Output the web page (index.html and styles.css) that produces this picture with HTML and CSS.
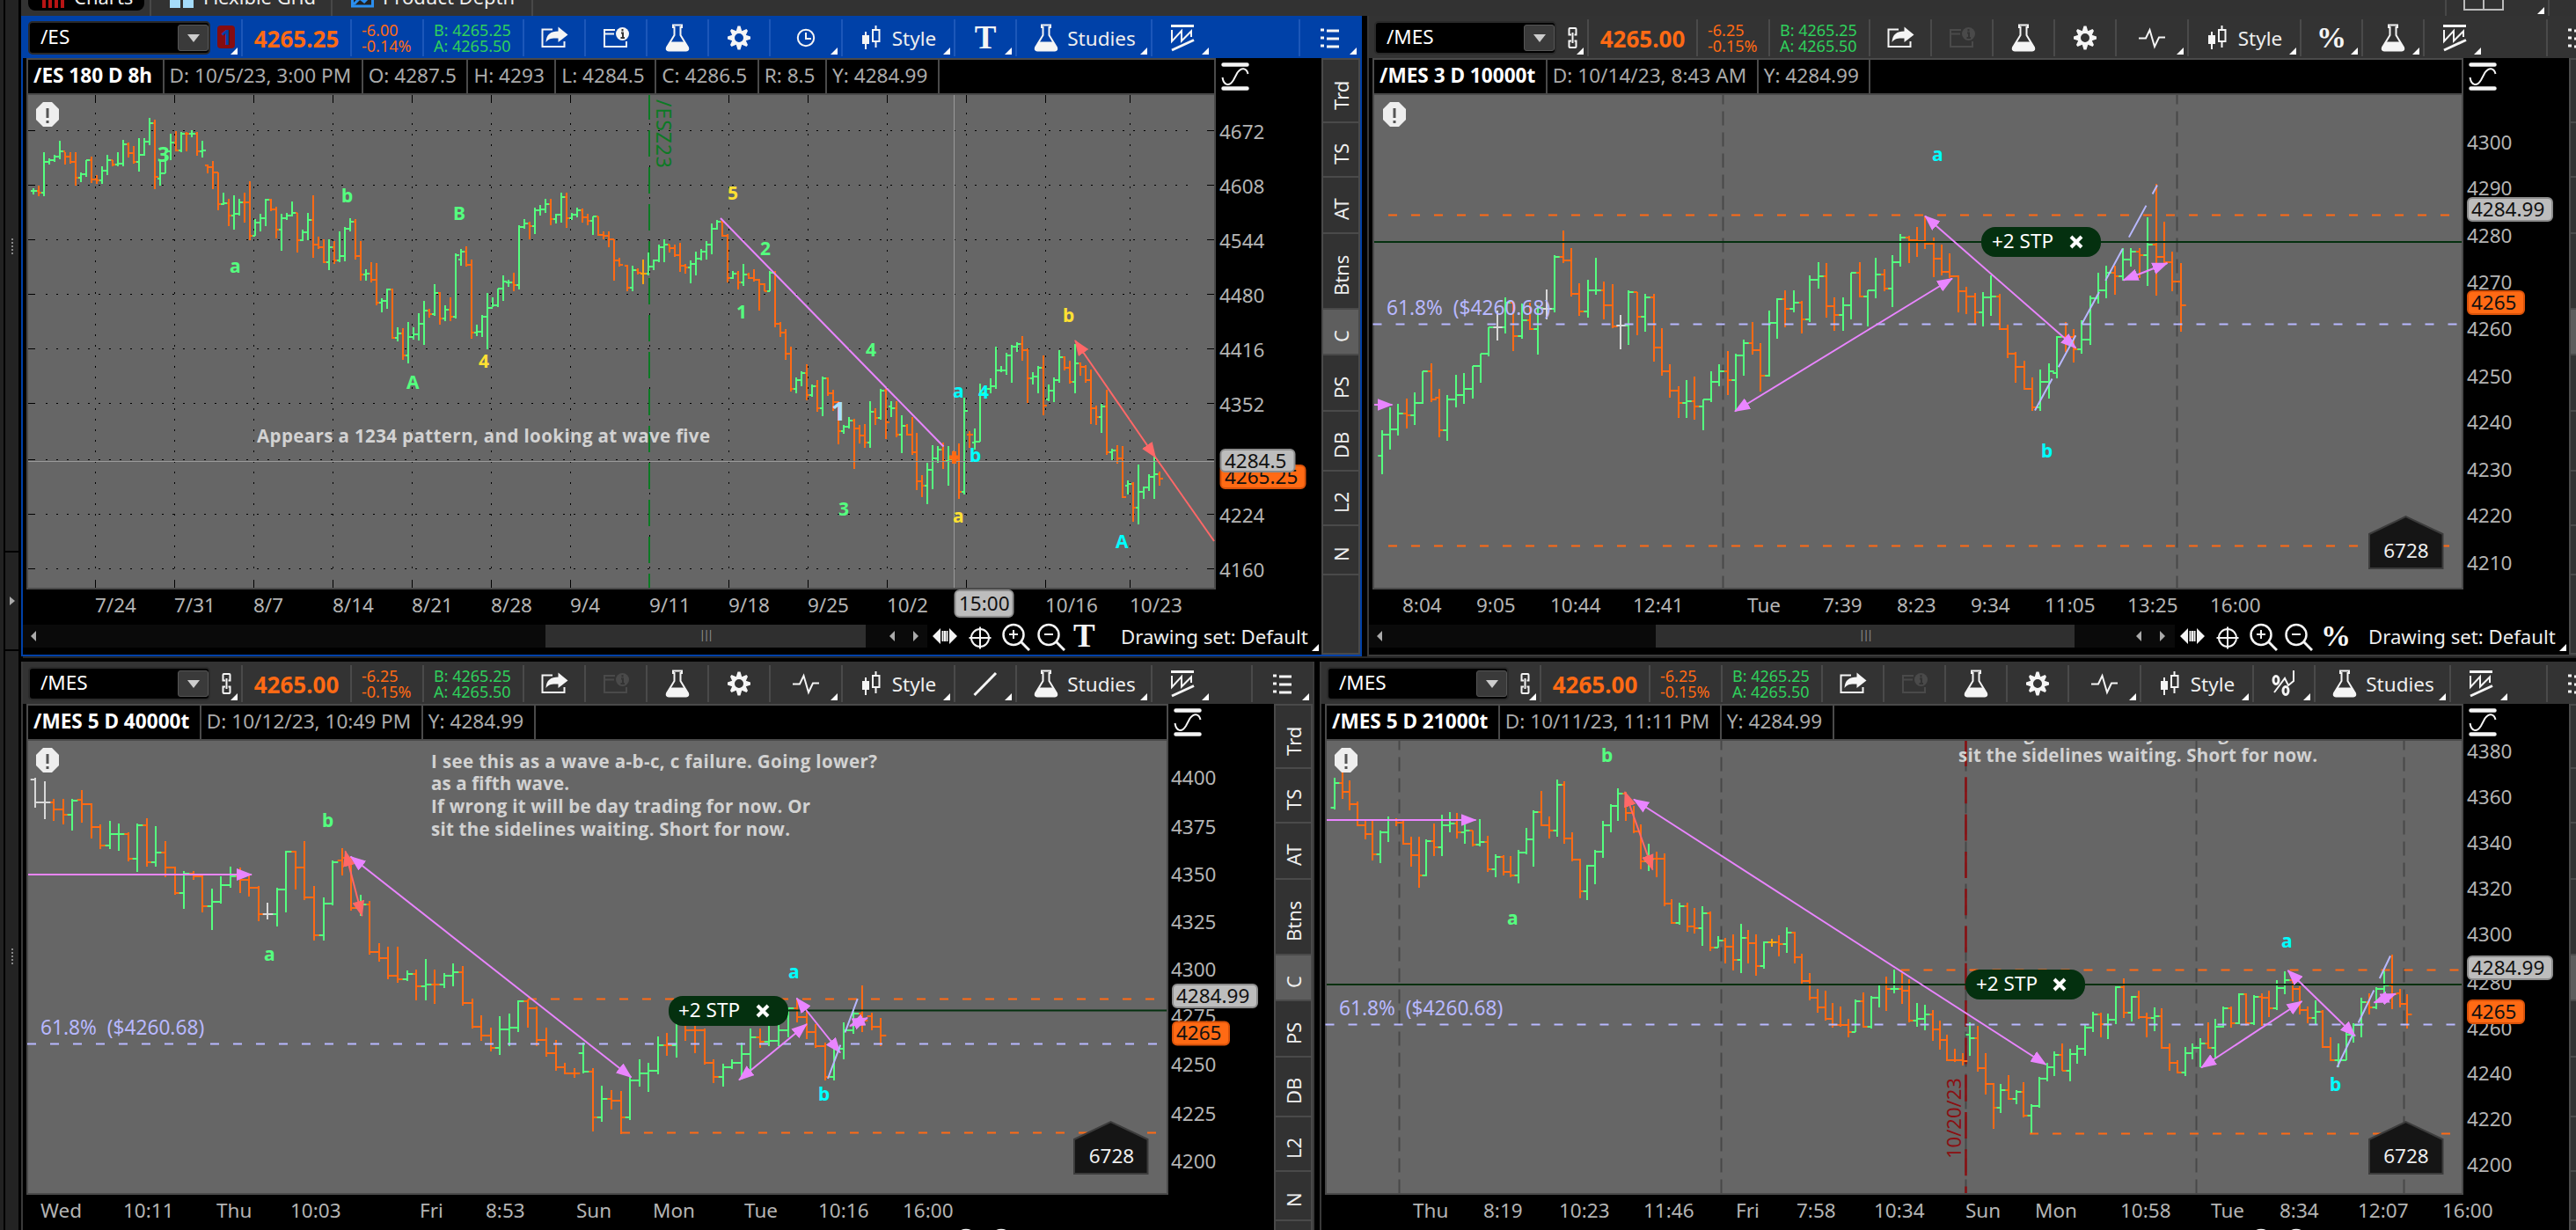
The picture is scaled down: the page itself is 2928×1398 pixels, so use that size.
FILE: index.html
```
<!DOCTYPE html>
<html lang="en">
<head>
<meta charset="utf-8">
<title>Charts - Flexible Grid</title>
<link rel="stylesheet" href="styles.css">
</head>
<body>

<!-- shared icons -->
<svg class="defs" width="0" height="0">
  <defs>
    <marker id="headP" viewBox="0 0 18 14" refX="17" refY="7" markerWidth="18" markerHeight="14" markerUnits="userSpaceOnUse" orient="auto-start-reverse"><path d="M0 0L18 7L0 14Z" fill="#e985ff"/></marker>
    <marker id="headR" viewBox="0 0 18 14" refX="17" refY="7" markerWidth="18" markerHeight="14" markerUnits="userSpaceOnUse" orient="auto-start-reverse"><path d="M0 0L18 7L0 14Z" fill="#ff6868"/></marker>
  </defs>
  <symbol id="share" viewBox="0 0 32 32"><path class="s" d="M14 6.500H2.500V26H27.500V20"/><path class="f" d="M20.500 3.500L31.500 12.500L20.500 21V16.500C13 16 9 17 6.500 21C7 12 12 8.500 20.500 8.500Z"/></symbol>
  <symbol id="info" viewBox="0 0 32 32"><path class="s" d="M15 7H3V26H28V20M3 11.500H14"/><circle class="f" cx="23.500" cy="11.500" r="7.500"/><path class="cut" d="M23.500 6V8.500M22 10.500H24V15.500M21.500 16H26"/></symbol>
  <symbol id="flask" viewBox="0 0 32 32"><path class="s" d="M11 1.500H21V4H19.500V13L28 27Q29 30.500 26 30.500H6Q3 30.500 4 27L12.500 13V4H11Z"/><path class="f" d="M8 20.500H24L28 27Q29 30.500 26 30.500H6Q3 30.500 4 27Z"/></symbol>
  <symbol id="gear" viewBox="0 0 32 32"><path class="f" fill-rule="evenodd" d="M29 14.500V17.500L23.850 19.250L26 24L24.500 26L19.250 23.850L17.500 29.500H14.500L12.750 23.850L7.500 26L6 24L8.150 19.250L3 17.500V14.500L8.150 12.750L6 8L7.500 6L12.750 8.150L14.500 2.500H17.500L19.250 8.150L24.500 6L26 8L23.850 12.750ZM16 11A5 5 0 1 0 16 21A5 5 0 1 0 16 11Z"/></symbol>
  <symbol id="clock" viewBox="0 0 32 32"><circle class="s" cx="16" cy="16" r="9.200"/><path class="s" d="M16 10V17H22"/></symbol>
  <symbol id="pulse" viewBox="0 0 32 32"><path class="s" d="M1 16.500H9L13.500 7L19 26L24 15.500H31"/></symbol>
  <symbol id="candles" viewBox="0 0 24 32"><path class="s" d="M6 9V29M17.500 2V7M17.500 20V27"/><path class="f" d="M2 13H10V23H2Z"/><path class="s" d="M14 7H21.500V20H14Z"/></symbol>
  <symbol id="pattern" viewBox="0 0 32 32"><path class="s3" d="M3 2.500H29M4 30L29 18.500"/><path class="s" d="M4 7V20L15 8V19.500L26 8.500V15"/></symbol>
  <symbol id="list" viewBox="0 0 22 24"><path class="s3" d="M0 3H4M7 4H21M0 12H4M7 13H21M0 21H4M7 22H21"/></symbol>
  <symbol id="chain" viewBox="0 0 14 26"><path class="s" d="M5 9.500H2.500V3Q2.500 2 3.500 2H9.500Q10.500 2 10.500 3V9.500H8.500M5 16.500H2.500V23Q2.500 24 3.500 24H9.500Q10.500 24 10.500 23V16.500H8.500M6.500 7V19"/></symbol>
  <symbol id="trend" viewBox="0 0 32 32"><path class="s3" d="M3.500 29L28 4"/></symbol>
  <symbol id="sine" viewBox="0 0 32 32"><path class="s4" d="M2.500 2.500H29.500M2.500 29.500H29.500"/><path class="s" d="M1.500 17C3 26 9 28 14 20L18.500 11.500C23 5 29 6 30.500 13"/></symbol>
  <symbol id="expand" viewBox="0 0 28 20"><path class="f" d="M0 10L9 1V19ZM28 10L19 1V19Z"/><path class="s" d="M11.500 4V16M14 4V16M16.500 4V16"/></symbol>
  <symbol id="cross" viewBox="0 0 26 26"><circle class="s" cx="13" cy="13" r="10"/><path class="s" d="M13 0.500V25.500M0.500 13H25.500"/></symbol>
  <symbol id="zoomin" viewBox="0 0 32 32"><circle class="s25" cx="13" cy="13.500" r="11.500"/><path class="s3" d="M21.500 21.500L31 31"/><path class="s" d="M8 13H18M13 8V18"/></symbol>
  <symbol id="zoomout" viewBox="0 0 32 32"><circle class="s25" cx="13" cy="13.500" r="11.500"/><path class="s3" d="M21.500 21.500L31 31"/><path class="s" d="M8 13H18"/></symbol>
  <symbol id="alert" viewBox="0 0 28 30"><path class="f" d="M9 1H19L27 9V21L19 29H9L1 21V9Z"/><path d="M14 8V19M14 22V25" stroke="#555" stroke-width="3"/></symbol>
</svg>

<aside class="rail">
  <div class="rail-a"><i class="grip"></i></div>
  <div class="rail-b"><i class="open"></i></div>
  <div class="rail-c"><i class="grip"></i></div>
</aside>

<nav class="top">
  <div class="top-tab active"><svg width="26" height="26" viewBox="0 0 26 26"><path d="M0 16H4V26H0ZM7 10H11V26H7ZM14 5H18V26H14ZM21 0H25V26H21Z" fill="#b81414"/></svg>Charts</div>
  <div class="top-tab flex-tab"><svg width="28" height="26" viewBox="0 0 28 26"><path d="M0 0H12V12H0ZM0 15H12V26H0ZM15 0H27V12H15ZM15 15H27V26H15Z" fill="#a5dcfb"/></svg>Flexible Grid</div>
  <div class="top-tab depth-tab"><svg width="26" height="26" viewBox="0 0 26 26"><path d="M1.500 1H24.500V24H1.500Z" fill="#222" stroke="#2b8ff0" stroke-width="3"/><path d="M3 22L10 15L15 19L22 12" fill="none" stroke="#2b8ff0" stroke-width="3"/></svg>Product Depth</div>
  <div class="top-grid tri"><svg width="46" height="26" viewBox="0 0 46 26"><path d="M1 0V25H45V0M23 0V25" fill="none" stroke="#bbb" stroke-width="2"/></svg></div>
</nav>

<main class="work">
<div class="row">

<!-- /ES 180 D 8h -->
<section class="panel p1">
  <div class="toolbar">
    <div class="symbol"><span>/ES</span><b></b></div>
    <div class="link tri"><em>1</em></div>
    <div class="cell price">4265.25</div>
    <div class="cell change">-6.00<br>-0.14%</div>
    <div class="cell quote">B: 4265.25<br>A: 4265.50</div>
    <div class="cell"><svg class="ic"><use href="#share"/></svg></div>
    <div class="cell"><svg class="ic"><use href="#info"/></svg></div>
    <div class="cell"><svg class="ic"><use href="#flask"/></svg></div>
    <div class="cell"><svg class="ic"><use href="#gear"/></svg></div>
    <div class="cell mid tri"><svg class="ic"><use href="#clock"/></svg></div>
    <div class="cell style tri"><svg class="ic can"><use href="#candles"/></svg>Style</div>
    <div class="cell tri"><span class="serif">T</span></div>
    <div class="cell studies tri"><svg class="ic"><use href="#flask"/></svg>Studies</div>
    <div class="cell tri"><svg class="ic"><use href="#pattern"/></svg></div>
    <div class="cell last tri"><svg class="ic li"><use href="#list"/></svg></div>
  </div>
  <div class="body">
    <div class="chart">
      <div class="head">
        <div class="info"><b>/ES 180 D 8h</b><span>D: 10/5/23, 3:00 PM</span><span>O: 4287.5</span><span>H: 4293</span><span>L: 4284.5</span><span>C: 4286.5</span><span>R: 8.5</span><span>Y: 4284.99</span></div>
        <div class="mode"><svg class="ic"><use href="#sine"/></svg></div>
      </div>
      <svg class="plot" width="1476" height="602" viewBox="26 108 1476 602">
        <rect class="frame" x="30" y="106" width="1352" height="564"/>
        <rect class="bg" x="32" y="108" width="1348" height="560"/>
        <g id="grid"></g>
        <path class="expiry" d="M738 106V668"/>
        <text class="exp" transform="translate(745.500 113) rotate(90)" textLength="78">/ESZ23</text>
        <g id="bars1"></g>
        <path class="hair" d="M1084.500 108V668M32 524.500H1380"/>
        <path class="pick" d="M1084.500 513V527M1079 520H1090"/>
        <path class="pl" d="M819 248L1072.500 507.500"/>
        <path class="rl" marker-start="url(#headR)" marker-end="url(#headR)" d="M1222 387L1313.500 520"/>
        <path class="rl" d="M1313.500 520L1380 615"/>
        <g class="note g">
          <text x="261" y="310">a</text><text x="388" y="230">b</text><text x="515" y="250">B</text>
          <text class="big" x="179" y="184">3</text><text x="462" y="442">A</text>
          <text x="864" y="290">2</text><text x="837" y="362">1</text><text x="984" y="405">4</text><text x="953" y="586">3</text>
        </g>
        <g class="note y"><text x="544" y="418">4</text><text x="827" y="227">5</text><text x="1208" y="366">b</text><text x="1083" y="594">a</text></g>
        <g class="note c"><text x="1083" y="452">a</text><text x="1112" y="453">4</text><text x="1102" y="525">b</text><text x="1268" y="623">A</text></g>
        <text class="note huge" x="945" y="478">1</text>
        <text class="memo" x="292" y="503" textLength="515">Appears a 1234 pattern, and looking at wave five</text>
        <svg x="40" y="115" width="28" height="30"><use href="#alert"/></svg>
        <g class="axis">
          <text x="1386" y="158">4672</text><text x="1386" y="220">4608</text><text x="1386" y="282">4544</text><text x="1386" y="344">4480</text><text x="1386" y="406">4416</text><text x="1386" y="468">4352</text><text x="1386" y="594">4224</text><text x="1386" y="656">4160</text>
          <text x="108" y="696">7/24</text><text x="198" y="696">7/31</text><text x="288" y="696">8/7</text><text x="378" y="696">8/14</text><text x="468" y="696">8/21</text><text x="558" y="696">8/28</text><text x="648" y="696">9/4</text><text x="738" y="696">9/11</text><text x="828" y="696">9/18</text><text x="918" y="696">9/25</text><text x="1008" y="696">10/2</text><text x="1188" y="696">10/16</text><text x="1284" y="696">10/23</text>
        </g>
        <rect class="last" x="1387.500" y="529" width="96" height="26" rx="5"/><text class="bt" x="1392" y="549.500">4265.25</text>
        <rect class="cur" x="1387.500" y="511" width="84" height="25" rx="5"/><text class="bt" x="1392" y="532">4284.5</text>
        <rect class="cur" x="1085.500" y="671" width="66" height="30" rx="5"/><text class="bt" x="1090" y="693.500">15:00</text>
      </svg>
      <div class="foot">
        <div class="track"><i class="al"></i><div class="thumb">|||</div><i class="al r1"></i><i class="ar"></i></div>
        <div class="tools tri"><svg class="ic ex"><use href="#expand"/></svg><svg class="ic cr"><use href="#cross"/></svg><svg class="ic zi"><use href="#zoomin"/></svg><svg class="ic zo"><use href="#zoomout"/></svg><span class="serif">T</span><span class="set">Drawing set: Default</span></div>
      </div>
    </div>
    <div class="side"><a>Trd</a><a>TS</a><a>AT</a><a>Btns</a><a class="on">C</a><a>PS</a><a>DB</a><a>L2</a><a>N</a><a></a></div>
  </div>
</section>

<!-- /MES 3 D 10000t -->
<section class="panel p2">
  <div class="toolbar">
    <div class="symbol"><span>/MES</span><b></b></div>
    <div class="link tri"><svg class="ic ch"><use href="#chain"/></svg></div>
    <div class="cell price">4265.00</div>
    <div class="cell change">-6.25<br>-0.15%</div>
    <div class="cell quote">B: 4265.25<br>A: 4265.50</div>
    <div class="cell"><svg class="ic"><use href="#share"/></svg></div>
    <div class="cell dim"><svg class="ic"><use href="#info"/></svg></div>
    <div class="cell"><svg class="ic"><use href="#flask"/></svg></div>
    <div class="cell"><svg class="ic"><use href="#gear"/></svg></div>
    <div class="cell mid tri"><svg class="ic"><use href="#pulse"/></svg></div>
    <div class="cell style tri"><svg class="ic can"><use href="#candles"/></svg>Style</div>
    <div class="cell tri"><span class="serif pct">%</span></div>
    <div class="cell tri"><svg class="ic"><use href="#flask"/></svg></div>
    <div class="cell tri"><svg class="ic"><use href="#pattern"/></svg></div>
    <div class="cell last tri"><svg class="ic li"><use href="#list"/></svg></div>
  </div>
  <div class="body">
    <div class="chart">
      <div class="head">
        <div class="info"><b>/MES 3 D 10000t</b><span>D: 10/14/23, 8:43 AM</span><span>Y: 4284.99</span></div>
        <div class="mode"><svg class="ic"><use href="#sine"/></svg></div>
      </div>
      <svg class="plot" width="1364" height="602" viewBox="1556 108 1364 602">
        <rect class="frame" x="1560" y="106" width="1240" height="564"/>
        <rect class="bg" x="1562" y="108" width="1236" height="560"/>
        <path class="day" d="M1958.500 102.500V668M2474.500 102.500V668"/>
        <g id="bars2"></g>
        <path class="od" d="M1562 244.500H2786M1562 620.500H2786"/>
        <path class="fib" d="M1560.500 368.500H2796"/>
        <text class="fibt" x="1576" y="358" xml:space="preserve">61.8%  ($4260.68)</text>
        <path class="stop" d="M1562 275H2798"/>
        <rect class="pill" x="2252" y="258" width="136" height="34" rx="16"/><text class="pt" x="2264" y="282">+2 STP</text><path class="px" d="M2354 269L2366 281M2366 269L2354 281"/>
        <path class="pl" marker-end="url(#headP)" d="M1562 460H1582.500"/>
        <path class="pl" marker-start="url(#headP)" marker-end="url(#headP)" d="M1972 467.500L2219 316.500"/>
        <path class="pl" marker-start="url(#headP)" marker-end="url(#headP)" d="M2188 245.500L2359.500 395.500"/>
        <path class="pl" marker-start="url(#headP)" marker-end="url(#headP)" d="M2413.500 318.500L2463.500 299"/>
        <path class="proj" d="M2313 466.500L2452 210.500"/>
        <g class="note c"><text x="2196" y="183">a</text><text x="2320" y="520">b</text></g>
        <svg x="1571" y="115" width="28" height="30"><use href="#alert"/></svg>
        <path class="tag" d="M2693 607L2734.500 587L2776.500 607V646H2693Z"/><text class="tagt" x="2735" y="634">6728</text>
        <g class="axis">
          <text x="2804" y="170">4300</text><text x="2804" y="222">4290</text><text x="2804" y="276">4280</text><text x="2804" y="328.500">4270</text><text x="2804" y="382">4260</text><text x="2804" y="436">4250</text><text x="2804" y="488">4240</text><text x="2804" y="542">4230</text><text x="2804" y="594">4220</text><text x="2804" y="648">4210</text>
          <text x="1594" y="696">8:04</text><text x="1678" y="696">9:05</text><text x="1762" y="696">10:44</text><text x="1856" y="696">12:41</text><text x="1986" y="696">Tue</text><text x="2072" y="696">7:39</text><text x="2156" y="696">8:23</text><text x="2240" y="696">9:34</text><text x="2324" y="696">11:05</text><text x="2418" y="696">13:25</text><text x="2512" y="696">16:00</text>
        </g>
        <rect class="cur" x="2805" y="225" width="96" height="26" rx="5"/><text class="bt" x="2809" y="245.500">4284.99</text>
        <rect class="last" x="2805" y="331" width="64" height="26" rx="5"/><text class="bt" x="2809" y="351.500">4265</text>
      </svg>
      <div class="foot">
        <div class="track"><i class="al"></i><div class="thumb">|||</div><i class="al r1"></i><i class="ar"></i></div>
        <div class="tools tri"><svg class="ic ex"><use href="#expand"/></svg><svg class="ic cr"><use href="#cross"/></svg><svg class="ic zi"><use href="#zoomin"/></svg><svg class="ic zo"><use href="#zoomout"/></svg><span class="serif pct">%</span><span class="set">Drawing set: Default</span></div>
      </div>
    </div>
    <div class="side"><a></a><a></a><a></a><a></a><a class="on"></a><a></a><a></a><a></a><a></a><a></a></div>
  </div>
</section>
</div>

<div class="row">

<!-- /MES 5 D 40000t -->
<section class="panel p3">
  <div class="toolbar">
    <div class="symbol"><span>/MES</span><b></b></div>
    <div class="link tri"><svg class="ic ch"><use href="#chain"/></svg></div>
    <div class="cell price">4265.00</div>
    <div class="cell change">-6.25<br>-0.15%</div>
    <div class="cell quote">B: 4265.25<br>A: 4265.50</div>
    <div class="cell"><svg class="ic"><use href="#share"/></svg></div>
    <div class="cell dim"><svg class="ic"><use href="#info"/></svg></div>
    <div class="cell"><svg class="ic"><use href="#flask"/></svg></div>
    <div class="cell"><svg class="ic"><use href="#gear"/></svg></div>
    <div class="cell mid tri"><svg class="ic"><use href="#pulse"/></svg></div>
    <div class="cell style tri"><svg class="ic can"><use href="#candles"/></svg>Style</div>
    <div class="cell tri"><svg class="ic"><use href="#trend"/></svg></div>
    <div class="cell studies tri"><svg class="ic"><use href="#flask"/></svg>Studies</div>
    <div class="cell tri"><svg class="ic"><use href="#pattern"/></svg></div>
    <div class="cell last tri"><svg class="ic li"><use href="#list"/></svg></div>
  </div>
  <div class="body">
    <div class="chart">
      <div class="head">
        <div class="info"><b>/MES 5 D 40000t</b><span>D: 10/12/23, 10:49 PM</span><span>Y: 4284.99</span></div>
        <div class="mode"><svg class="ic"><use href="#sine"/></svg></div>
      </div>
      <svg class="plot" width="1422" height="556" viewBox="26 842 1422 556">
        <rect class="frame" x="30" y="840" width="1298" height="518"/>
        <rect class="bg" x="32" y="842" width="1294" height="514"/>
        <g id="bars3"></g>
        <path class="od" d="M600 1135.500H1313M706 1287.500H1315"/>
        <path class="fib" d="M31 1186.500H1315"/>
        <text class="fibt" x="46" y="1176" xml:space="preserve">61.8%  ($4260.68)</text>
        <path class="stop" d="M890 1148.500H1326"/>
        <rect class="pill" x="760" y="1132" width="136" height="34" rx="16"/><text class="pt" x="771" y="1156">+2 STP</text><path class="px" d="M861 1143L873 1155M873 1143L861 1155"/>
        <path class="pl" marker-end="url(#headP)" d="M32 994H286"/>
        <path class="rl" marker-start="url(#headR)" marker-end="url(#headR)" d="M392.500 967.500L411.500 1041"/>
        <path class="pl" marker-start="url(#headP)" marker-end="url(#headP)" d="M398.500 973.500L717.500 1224.500"/>
        <path class="pl" marker-start="url(#headP)" marker-end="url(#headP)" d="M905.500 1134.500L955 1196.500"/>
        <path class="pl" marker-start="url(#headP)" marker-end="url(#headP)" d="M840 1227.500L917 1164"/>
        <path class="pl" marker-start="url(#headP)" marker-end="url(#headP)" d="M966 1166L986 1157"/>
        <path class="proj" d="M941 1226L980 1121"/>
        <g class="note g"><text x="366" y="940">b</text><text x="300" y="1092">a</text></g>
        <g class="note c"><text x="896" y="1112">a</text><text x="930" y="1251">b</text></g>
        <g class="memo">
          <text x="490" y="872.500" textLength="507">I see this as a wave a-b-c, c failure. Going lower?</text>
          <text x="490" y="898" textLength="157">as a fifth wave.</text>
          <text x="490" y="924" textLength="431">If wrong it will be day trading for now. Or</text>
          <text x="490" y="950" textLength="408">sit the sidelines waiting. Short for now.</text>
        </g>
        <svg x="40" y="849" width="28" height="30"><use href="#alert"/></svg>
        <path class="tag" d="M1221 1295L1262.500 1275L1304.500 1295V1334H1221Z"/><text class="tagt" x="1263.500" y="1322">6728</text>
        <g class="axis">
          <text x="1331" y="891.500">4400</text><text x="1331" y="947.500">4375</text><text x="1331" y="1001.500">4350</text><text x="1331" y="1055.500">4325</text><text x="1331" y="1109.500">4300</text><text x="1331" y="1163">4275</text><text x="1331" y="1217.500">4250</text><text x="1331" y="1273.500">4225</text><text x="1331" y="1327.500">4200</text>
          <text x="46" y="1384">Wed</text><text x="140" y="1384">10:11</text><text x="246" y="1384">Thu</text><text x="330" y="1384">10:03</text><text x="477" y="1384">Fri</text><text x="552" y="1384">8:53</text><text x="655" y="1384">Sun</text><text x="742" y="1384">Mon</text><text x="846" y="1384">Tue</text><text x="930" y="1384">10:16</text><text x="1026" y="1384">16:00</text>
        </g>
        <rect class="cur" x="1333" y="1119" width="96" height="26" rx="5"/><text class="bt" x="1337" y="1139.500">4284.99</text>
        <rect class="last" x="1333" y="1161.500" width="64" height="26" rx="5"/><text class="bt" x="1337" y="1182">4265</text>
      </svg>
      <div class="foot">
        <div class="track"></div>
        <div class="tools"><svg class="ic ex"><use href="#expand"/></svg><svg class="ic cr"><use href="#cross"/></svg><svg class="ic zi"><use href="#zoomin"/></svg><svg class="ic zo"><use href="#zoomout"/></svg></div>
      </div>
    </div>
    <div class="side"><a>Trd</a><a>TS</a><a>AT</a><a>Btns</a><a class="on">C</a><a>PS</a><a>DB</a><a>L2</a><a>N</a><a></a></div>
  </div>
</section>

<!-- /MES 5 D 21000t -->
<section class="panel p4">
  <div class="toolbar">
    <div class="symbol"><span>/MES</span><b></b></div>
    <div class="link tri"><svg class="ic ch"><use href="#chain"/></svg></div>
    <div class="cell price">4265.00</div>
    <div class="cell change">-6.25<br>-0.15%</div>
    <div class="cell quote">B: 4265.25<br>A: 4265.50</div>
    <div class="cell"><svg class="ic"><use href="#share"/></svg></div>
    <div class="cell dim"><svg class="ic"><use href="#info"/></svg></div>
    <div class="cell"><svg class="ic"><use href="#flask"/></svg></div>
    <div class="cell"><svg class="ic"><use href="#gear"/></svg></div>
    <div class="cell mid tri"><svg class="ic"><use href="#pulse"/></svg></div>
    <div class="cell style tri"><svg class="ic can"><use href="#candles"/></svg>Style</div>
    <div class="cell tri"><svg class="ic" viewBox="0 0 32 32"><ellipse class="s3" cx="7" cy="12" rx="3" ry="4.500"/><ellipse class="s3" cx="18" cy="24" rx="3" ry="4.500"/><path class="s" d="M5 26L17 10L21 18L27 13V1"/></svg></div>
    <div class="cell studies tri"><svg class="ic"><use href="#flask"/></svg>Studies</div>
    <div class="cell tri"><svg class="ic"><use href="#pattern"/></svg></div>
    <div class="cell last tri"><svg class="ic li"><use href="#list"/></svg></div>
  </div>
  <div class="body">
    <div class="chart">
      <div class="head">
        <div class="info"><b>/MES 5 D 21000t</b><span>D: 10/11/23, 11:11 PM</span><span>Y: 4284.99</span></div>
        <div class="mode"><svg class="ic"><use href="#sine"/></svg></div>
      </div>
      <svg class="plot" width="1418" height="556" viewBox="1502 842 1418 556">
        <rect class="frame" x="1506" y="840" width="1294" height="518"/>
        <rect class="bg" x="1508" y="842" width="1290" height="514"/>
        <path class="day" d="M1590.500 836.500V1356M1956.500 836.500V1356M2234.500 836.500V1356M2496.500 836.500V1356M2732.500 836.500V1356"/>
        <path class="roll" d="M2234.500 841V1356"/>
        <text class="rollt" transform="translate(2228.500 1317) rotate(-90)">10/20/23</text>
        <g id="bars4"></g>
        <path class="od" d="M2160.500 1102.500H2796M2307 1288.500H2786"/>
        <path class="fib" d="M1506.500 1164.500H2792"/>
        <text class="fibt" x="1522" y="1154" xml:space="preserve">61.8%  ($4260.68)</text>
        <path class="stop" d="M1508 1119H2798"/>
        <rect class="pill" x="2234" y="1102" width="136" height="34" rx="16"/><text class="pt" x="2246" y="1126">+2 STP</text><path class="px" d="M2335 1113L2347 1125M2347 1113L2335 1125"/>
        <path class="pl" marker-end="url(#headP)" d="M1508 932H1677.500"/>
        <path class="rl" marker-start="url(#headR)" marker-end="url(#headR)" d="M1847 900L1878.500 988.500"/>
        <path class="pl" marker-start="url(#headP)" marker-end="url(#headP)" d="M1857 908.500L2325.500 1210"/>
        <path class="pl" marker-start="url(#headP)" marker-end="url(#headP)" d="M2600.500 1103L2677 1177.500"/>
        <path class="pl" marker-start="url(#headP)" marker-end="url(#headP)" d="M2502 1213.500L2616.500 1138"/>
        <path class="pl" marker-start="url(#headP)" marker-end="url(#headP)" d="M2698.500 1139.500L2723 1129.500"/>
        <path class="proj" d="M2656.500 1213L2717 1086.500"/>
        <g class="note g"><text x="1820" y="866">b</text><text x="1713" y="1050.500">a</text></g>
        <g class="note c"><text x="2593" y="1076.500">a</text><text x="2648" y="1239.500">b</text></g>
        <g class="memo">
          <text x="2226" y="840.500" textLength="431">If wrong it will be day trading for now. Or</text>
          <text x="2226" y="866" textLength="408">sit the sidelines waiting. Short for now.</text>
        </g>
        <svg x="1516" y="849" width="28" height="30"><use href="#alert"/></svg>
        <path class="tag" d="M2693 1295L2734.500 1275L2776.500 1295V1334H2693Z"/><text class="tagt" x="2735" y="1322">6728</text>
        <g class="axis">
          <text x="2804" y="862">4380</text><text x="2804" y="914">4360</text><text x="2804" y="966">4340</text><text x="2804" y="1018">4320</text><text x="2804" y="1070">4300</text><text x="2804" y="1125">4280</text><text x="2804" y="1176.500">4260</text><text x="2804" y="1228">4240</text><text x="2804" y="1280">4220</text><text x="2804" y="1332">4200</text>
          <text x="1606" y="1384">Thu</text><text x="1686" y="1384">8:19</text><text x="1772" y="1384">10:23</text><text x="1868" y="1384">11:46</text><text x="1973" y="1384">Fri</text><text x="2042" y="1384">7:58</text><text x="2130" y="1384">10:34</text><text x="2234" y="1384">Sun</text><text x="2313" y="1384">Mon</text><text x="2410" y="1384">10:58</text><text x="2513" y="1384">Tue</text><text x="2591" y="1384">8:34</text><text x="2680" y="1384">12:07</text><text x="2776" y="1384">16:00</text>
        </g>
        <rect class="cur" x="2805" y="1087" width="96" height="26" rx="5"/><text class="bt" x="2809" y="1107.500">4284.99</text>
        <rect class="last" x="2805" y="1137" width="64" height="26" rx="5"/><text class="bt" x="2809" y="1157.500">4265</text>
      </svg>
      <div class="foot">
        <div class="track"></div>
        <div class="tools"><svg class="ic ex"><use href="#expand"/></svg><svg class="ic cr"><use href="#cross"/></svg><svg class="ic zi"><use href="#zoomin"/></svg><svg class="ic zo"><use href="#zoomout"/></svg></div>
      </div>
    </div>
    <div class="side"><a></a><a></a><a></a><a></a><a class="on"></a><a></a><a></a><a></a><a></a><a></a></div>
  </div>
</section>
</div>
</main>

<script src="bars.js"></script>
</body>
</html>
```
FILE: styles.css
```
* {
	box-sizing: border-box;
}

html { overflow: hidden; }

body {
	margin: 0;
	width: 2928px;
	height: 1398px;
	overflow: hidden;
	background: #000;
	color: #eee;
	font: 22px "Noto Sans", "Open Sans", sans-serif;
	display: grid;
	grid-template-columns: 24px 2904px;
	grid-template-rows: 18px 1380px;
}

.defs { position: absolute; }

/* icons */
.ic {
	width: 32px;
	height: 32px;
	flex: none;
	color: #f5f5f5;
}
.s, .s25, .s3, .s4 { fill: none; stroke: currentColor; stroke-width: 2; }
.s25 { stroke-width: 2.5; }
.s3 { stroke-width: 3; }
.s4 { stroke-width: 4.5; stroke-linecap: round; }
.f { fill: currentColor; }
.cut { fill: none; stroke: #333; stroke-width: 2; }
.p1 .cut { stroke: #0041a8; }
.dim .ic { color: #4a4a4a; }
.can { width: 24px; }
.li { width: 22px; height: 24px; }
.ch { width: 14px; height: 26px; }
.ex { width: 28px; height: 20px; }
.cr { width: 26px; height: 26px; margin: 4px 0 0 13px; }
.zi { margin: 2px 0 0 12px; }
.zo { margin: 2px 0 0 8px; }

.serif { font: bold 37px/40px "Liberation Serif", serif; color: #f5f5f5; }
.pct { font-size: 34px; }

.tri { position: relative; }
.tri::after {
	content: "";
	position: absolute;
	right: 4px;
	bottom: 2px;
	border-left: 8px solid transparent;
	border-bottom: 8px solid #fff;
}

/* left rail */
.rail {
	grid-row: 1 / 3;
	background: #000;
	border-left: 4px solid #222;
	padding: 0 3px 0 2px;
	display: grid;
	grid-template-rows: 626px 110px 658px;
	gap: 2px;
}
.rail div {
	background: #232323;
	display: flex;
	justify-content: center;
}
.grip {
	width: 2px;
	height: 19px;
	margin-top: 271px;
	background: repeating-linear-gradient(#888 0 2px, #232323 2px 4px);
}
.rail-c .grip { margin-top: 338px; }
.open {
	align-self: center;
	border: 5px solid transparent;
	border-left: 6px solid #aaa;
	border-right: 0;
}

/* top tabs */
.top {
	background: #323232;
	display: flex;
	overflow: hidden;
}
.top-tab {
	margin-top: -16px;
	padding-left: 21px;
	border-right: 2px solid #484848;
	display: flex;
	line-height: 24px;
	height: 34px;
}
.top-tab svg { margin: -1px 10px 0 0; }
.active {
	background: #000;
	border: 0;
	border-radius: 8px;
	height: 28px;
	width: 132px;
	margin-left: 8px;
	padding-left: 16px;
}
.flex-tab { border-left: 2px solid #484848; margin-left: 6px; width: 208px; }
.depth-tab { width: 228px; }
.top-grid {
	margin-left: auto;
	width: 119px;
	margin-right: 30px;
	margin-top: -14px;
	border: solid #484848;
	border-width: 0 2px;
	padding-left: 19px;
}

/* panels */
.work { width: 2942px; height: 1380px; overflow: hidden; }
.row {
	display: flex;
	gap: 6px;
	height: 728px;
	margin-bottom: 6px;
	box-shadow: 0 4px 0 -2px #262626;
	background: linear-gradient(90deg, #000, #000);
}
.panel {
	border: 2px solid #3a3a3a;
	border-top: 0;
	background: #000;
}
.p1 { width: 1524px; border-color: #0041a8; }
.p2 { width: 1412px; }
.p3 { width: 1470px; }
.p4 { width: 1466px; }

.toolbar {
	height: 48px;
	padding: 4px 0 2px 6px;
	background: #333;
	display: flex;
	font-size: 22.5px;
}
.p1 .toolbar { background: #0041a8; margin: 0 -2px; padding-left: 8px; padding-right: 2px; }

.symbol {
	width: 207px;
	height: 38px;
	margin: 2px 0 0 0;
	border: 2px solid #2a2a2a;
	border-radius: 5px;
	background: #000;
	display: flex;
	justify-content: space-between;
	padding: 2px 0;
	line-height: 28px;
	color: #fff;
}
.symbol span { padding-left: 12px; }
.symbol b {
	width: 35px;
	height: 30px;
	border: 1px solid #555;
	border-radius: 3px;
	background: #3a3a3a;
	display: flex;
	justify-content: center;
	align-items: center;
}
.symbol b::after {
	content: "";
	border: 7px solid transparent;
	border-top: 9px solid #ccc;
	border-bottom: 0;
}
.link {
	width: 35px;
	display: flex;
	align-items: center;
	padding-left: 12px;
}
.p1 .link { padding-left: 8px; }
.link em {
	width: 20px;
	height: 26px;
	margin-top: -2px;
	border-radius: 4px;
	background: #850c10;
	color: #0041a8;
	font: bold 23px/26px "Noto Sans", sans-serif;
	text-align: center;
}

.cell {
	width: 70px;
	flex: none;
	border-left: 2px solid #4a4a4a;
	display: flex;
	justify-content: center;
	align-items: center;
}
.p1 .cell { border-color: #1c57b9; }
.price { width: 124px; color: #ff6a14; font-size: 26px; font-weight: bold; padding-top: 2px; }
.change, .quote {
	font-size: 18px;
	line-height: 18px;
	justify-content: flex-start;
	padding-left: 11px;
}
.change { width: 82px; color: #ff6a14; }
.quote { width: 114px; color: #2fd05c; }
.mid { width: 82px; }
.style { width: 128px; gap: 12px; }
.studies { width: 154px; gap: 8px; }
.last { margin-left: auto; }

.body { display: flex; height: 678px; }
.chart { flex: 1; }
.head { display: flex; height: 42px; }
.info {
	flex: 1;
	margin-left: 4px;
	border: 2px solid #4a4a4a;
	display: flex;
	font-size: 22.6px;
}
.info b, .info span {
	border-right: 2px solid #4a4a4a;
	line-height: 35px;
	padding: 0 11.5px 0 6px;
	white-space: nowrap;
}
.info b { color: #fff; }
.info span { color: #aaa; }
.mode { width: 120px; padding: 5px 0 0 6px; }

.plot { display: block; }

/* chart drawing */
.frame { fill: #4a4a4a; }
.bg { fill: #666; }
.gd, .gt { stroke: #000; fill: none; }
.gv { stroke-dasharray: 2 10; }
.gh { stroke-dasharray: 2 10; }
.bar { fill: none; stroke-width: 2; }
.bar-g { stroke: #55ff7f; }
.bar-o { stroke: #ff6a14; }
.bar-w { stroke: #d8d8d8; }
.bar-y { stroke: #ffa510; }
.expiry { stroke: #0c7a24; stroke-width: 2; stroke-dasharray: 30 12; }
.exp { fill: #0c7a24; font-size: 23px; }
.hair { stroke: #9a9a9a; fill: none; }
.pick { stroke: #ff6a14; stroke-width: 5; }
.pl { stroke: #e985ff; stroke-width: 2; fill: none; }
.rl { stroke: #ff6868; stroke-width: 2; fill: none; }
.day { stroke: #484848; stroke-width: 2; stroke-dasharray: 16 8; fill: none; }
.roll { stroke: #8b0f12; stroke-width: 2.5; stroke-dasharray: 30 12.3; }
.rollt { fill: #8b0f12; }
.od { stroke: #ff6a14; stroke-width: 2; stroke-dasharray: 10 16; fill: none; }
.p2 .od { stroke-dashoffset: 10; }
.fib { stroke: #b8b8ff; stroke-width: 2; stroke-dasharray: 10 16; }
.fibt { fill: #b8b8ff; font-size: 22.7px; white-space: pre; }
.stop { stroke: #04300f; stroke-width: 2; }
.pill { fill: #04300f; }
.pt { fill: #fff; font-size: 22.5px; }
.px { stroke: #fff; stroke-width: 4; }
.proj { stroke: #b8b8ff; stroke-width: 2; stroke-dasharray: 41 15; }
.note { font-weight: bold; font-size: 21px; }
.g { fill: #55ff7f; }
.y { fill: #ffe033; }
.c { fill: #00ffff; }
.big { font-size: 24px; }
.huge { font-size: 29px; fill: #a8e0ff; }
.memo { fill: #d2d2d2; font: bold 20.5px "Open Sans", "Noto Sans", sans-serif; }
.axis { fill: #b4b4b4; font-size: 22.5px; }
.cur { fill: #bdbdbd; stroke: #8c8c8c; stroke-width: 2; }
rect.last { fill: #ff6a14; stroke: #d9520a; stroke-width: 2; }
.bt { fill: #111; font-size: 22.5px; }
.tag { fill: #151515; stroke: #3c3c3c; stroke-width: 2; }
.tagt { fill: #eee; font-size: 22.5px; text-anchor: middle; }

/* scroll row */
.foot { display: flex; height: 26px; }
.track {
	flex: 1;
	background: #0a0a0a;
	display: flex;
	align-items: center;
}
.thumb {
	height: 26px;
	background: #2f2f2f;
	color: #999;
	font-size: 12px;
	line-height: 24px;
	letter-spacing: -2px;
	text-align: center;
}
.p1 .thumb { width: 364px; margin-left: 579px; }
.p2 .thumb { width: 476px; margin-left: 311px; }
.al, .ar {
	border: 6px solid transparent;
	border-right: 6px solid #aaa;
	border-left: 0;
	margin-left: 9px;
}
.ar { border-left: 6px solid #aaa; border-right: 0; margin-left: 21px; }
.al.r1 { margin-left: 27px; }
.p2 .al.r1 { margin-left: 70px; }
.tools {
	width: 448px;
	padding-left: 6px;
	display: flex;
	align-items: center;
	white-space: nowrap;
}
.tools.tri::after { bottom: -4px; right: 3px; }
.tools .serif { width: 26px; margin-left: 9px; }
.set { margin-left: 28px; font-size: 22.2px; }

/* side tabs */
.side {
	width: 44px;
	background: #4a4a4a;
	padding: 2px;
	display: grid;
	grid-template-rows: 70px 60px 62px 84px 50px 62px 66px 60px 54px 1fr;
	gap: 2px;
}
.side a {
	background: #323232;
	writing-mode: vertical-rl;
	transform: rotate(180deg);
	display: flex;
	justify-content: center;
	align-items: center;
	/* turned round, so this pushes the label down */
	padding-bottom: 10px;
}
.side .on { background: #5e5e5e; }
```
FILE: bars.js
```
// OHLC bars, one "high low close [open] [colour]" entry per bar.
// Values run down the screen; y = base + value * unit.
// The open is the previous close unless it is given.
var charts = [
{ id: 'bars1', base: 0, unit: 1/3, runs: [
  { from: 38.3, to: 704.3, data: '642 664 650 650 g,634 668 656,520 668 553,540 562 545,527 552 533,480 542 517,520 560 535,520 557 553,520 633 607,588 622 595,545 602 547,533 625 613,598 628 614,568 628 583,528 598 547,545 566 560,520 566 557,478 566 492,485 536 523,497 557 553,472 585 529,472 530 482,402 495 420,407 645 602,545 632 590 608,515 592 517,455 545 487,448 517 512,450 518 457,450 517 457 457 o,443 468 457,450 530 516,480 537 512,562 590 570 565,550 645 589,587 717 697,658 700 692,678 770 735,665 782 728,678 735 690,658 760 690 690 o,618 820 805,748 805 758,730 790 745,677 770 680,677 720 714,706 814 782,730 856 745,725 750 735,688 738 727,725 860 818,783 822 793,725 820 750,665 878 835,808 850 842,815 898 895,815 920 842,822 900 888,790 895 872,773 890 780,743 790 757,748 885 872,822 957 937,917 957 932,893 962 955,898 1040 1033,1018 1065 1027,983 1052 986,983 1155 1153,1115 1165 1136,1120 1228 1213,1098 1240 1148,1115 1158 1141,1067 1162 1105,1025 1175 1060,1052 1082 1070,970 1078 1000,995 1108 1087,1042 1095 1057,1013 1095 1081,863 1085 870,850 905 858 885,840 910 902,885 1155 1135,1108 1145 1130,1073 1150 1080,1000 1190 1050,1013 1048 1040,983 1048 985,940 1025 960,953 978 962 962 g,930 992 972,767 988 773,748 780 763,757 815 770,707 797 718,700 735 715,677 725 697,677 767 747,730 762 733,658 760 672,658 778 745,725 750 733,707 740 718,712 760 742,730 767 752,737 802 738,737 805 800,788 817 804,790 843 817,815 957 887,880 908 903' },
  { from: 712.6, to: 748.6, data: '903 993 980 907 o,905 993 920,915 935 931,885 970 932 932 y,862 938 908,885 920 888,835 893 842' },
  { from: 754.6, to: 1318.4, data: '815 893 835 842,833 862 847,833 875 870,827 927 907,900 932 912,887 965 900,857 940 882,850 887 858,822 885 835,762 868 780,750 782 757,757 808 805,797 963 948,925 950 932,925 988 962,900 975 937,930 950 948,918 960 955,952 1060 968,965 993 992,925 992 930,925 1115 1105,1098 1148 1135,1122 1228 1207,1181 1335 1327,1288 1340 1297,1265 1317 1273,1242 1365 1347,1312 1352 1317,1296 1405 1393,1283 1418 1290,1287 1350 1340,1330 1402 1372,1368 1515 1470,1450 1480 1455,1422 1460 1435,1428 1600 1460,1450 1513 1484,1445 1527 1508,1367 1527 1405,1392 1450 1425,1325 1430 1333,1327 1498 1440,1368 1422 1393 1387 g,1368 1492 1483,1415 1545 1453,1445 1485 1483,1423 1550 1543,1475 1672 1640,1620 1695 1657,1577 1720 1603,1517 1668 1563,1522 1577 1532,1510 1600 1573,1522 1655 1565,1535 1580 1573,1512 1702 1677,1355 1685 1400,1470 1528 1483 1483 o,1462 1532 1505 1508,1308 1505 1340,1315 1345 1325,1290 1340 1317,1182 1325 1262,1247 1270 1262,1202 1277 1213,1175 1305 1182,1168 1200 1172,1145 1230 1195,1187 1373 1290,1270 1310 1285,1248 1342 1255,1212 1415 1382,1310 1367 1333 1363,1288 1372 1297,1193 1305 1218,1215 1262 1255,1230 1308 1303,1172 1342 1238,1235 1282 1250,1245 1305 1297,1260 1445 1393,1383 1450 1423,1378 1475 1385,1330 1550 1543,1530 1570 1537,1518 1582 1563,1522 1697 1695,1637 1685 1650 1657,1645 1780 1730,1583 1787 1676,1660 1702 1663,1617 1675 1627,1555 1702 1617,1608 1655 1632' }
] },
{ id: 'bars2', base: 0, unit: 1/3, runs: [
  { from: 1570.6, to: 2478.6, data: '1468 1617 1483 1555,1390 1533 1465,1378 1485 1411,1360 1462 1417,1337 1450 1375,1265 1378 1267,1240 1372 1363,1325 1492 1466 1357 o,1348 1503 1363,1277 1388 1347,1272 1377 1327,1247 1360 1249,1205 1305 1207,1115 1215 1117,1060 1162 1117 1117 w,1013 1137 1033,1027 1197 1147,1035 1155 1093,1033 1125 1123,1040 1210 1050,988 1088 1052 1052 w,870 1065 877,785 897 889,845 1010 1003,965 1077 1063,953 1083 991,880 1005 991,960 1088 1040,970 1118 1112,1073 1192 1111 1111 w,990 1175 997,995 1142 1081,1002 1130 1015,1002 1233 1185,1120 1280 1267,1242 1357 1333,1318 1425 1375,1295 1425 1369,1285 1432 1387,1362 1467 1363,1265 1372 1303,1242 1317 1267,1198 1348 1297,1205 1400 1213,1157 1280 1171,1098 1210 1195,1170 1335 1280,1060 1283 1100,1018 1155 1021,990 1117 1052,990 1065 1033,1025 1137 1088,940 1097 955,893 983 943,898 1083 1045,1013 1127 1075,1013 1127 1040,930 1090 931,893 1013 1010,990 1113 991,880 1018 937,918 993 985,870 1048 895,797 910 811,803 897 818,773 875 823,738 850 830,810 945 883,833 940 926,863 948 943,940 1065 992,978 1070 1010,1000 1105 1064,995 1113 1015,940 1078 1010,1002 1125 1123,1108 1222 1207,1200 1305 1250,1230 1328 1327,1288 1402 1388,1260 1402 1303,1240 1360 1267,1145 1290 1148 1273,1098 1200 1148 1148 o,1122 1235 1190,1092 1205 1159,1007 1175 1016,930 1035 991,905 1018 931,905 1005 943,845 958 884,845 910 858,847 947 871,742 975 835,628 1007 877,755 905 895,857 993 960,898 1132 1040' }
] },
{ id: 'bars3', base: 740, unit: 1/2.383, runs: [
  { from: 40.2, to: 1001.2, data: '342 423 410 348 w,352 456 411 411 w,400 460 430,400 469 444,400 485 405,376 465 415 402,413 507 477,470 537 526,461 537 496,466 542 496,490 570 563,466 599 472,452 584 573,475 585 545,514 612 587,585 660 655,596 699 603,596 619 609,607 708 691,643 756 679,609 684 634,585 641 610,586 656 620,605 665 640,637 732 712,682 727 712 712 w,641 746 645,542 708 544,542 646 587,514 675 668,636 784 769,667 784 683,566 689 573,533 608 560 568 o,560 703 697,661 718 687,676 822 816,790 841 831,800 889 879,800 899 888,866 893 874,862 946 907,833 946 902,862 956 902 902 o,872 913 879,847 908 869,853 961 954,942 1022 1017,987 1056 1041,1020 1084 1074,990 1094 1025,981 1070 1021,947 1033 949,943 1019 968,962 1069 1054,1019 1099 1088,1054 1137 1128,1115 1146 1144,1130 1156 1145,1060 1143 1140 1088 g,1130 1300 1264,1177 1275 1212,1190 1242 1217,1192 1308 1264,1150 1270 1164,1105 1180 1145,1115 1193 1136,1043 1147 1068,1035 1095 1068 1068 o,1000 1100 1010,1005 1056 1026,1005 1090 1026 1026 o,1022 1120 1116,1105 1170 1154,1117 1180 1126,1105 1132 1116,1060 1160 1092,1022 1140 1045,1022 1075 1057,1000 1070 1056,990 1070 1026,965 1046 968,942 1005 992,975 1050 1031,1010 1075 1069,1060 1162 1154,1065 1162 1078,1005 1105 1026,975 1037 981,905 1033 1000,980 1028 1017 990 o,994 1070 1041' }
] },
{ id: 'bars4', base: 740, unit: 1/2.383, runs: [
  { from: 1516.9, to: 2196.5, data: '342 430 358 425,320 400 382,351 432 415,408 475 472,454 510 495,460 566 550,485 574 491,447 517 458,452 475 465,460 525 521,504 584 554,504 641 607,509 611 515,466 555 531,443 556 473,437 490 467,438 508 492,470 522 487,485 528 525,456 530 516,500 598 592,550 612 557,552 608 597,556 612 607,538 628 545,480 550 511,432 585 435,380 475 473,447 508 487,347 502 362,352 522 507,490 570 564,562 670 650,580 675 582,538 632 544,461 560 473,414 490 420,371 461 387,381 461 439,420 493 488,470 590 569,523 595 565,543 612 563 563 o,547 690 683,672 738 736,681 741 692,682 760 745,697 766 750,690 799 711,705 812 802,772 803 783,778 847 801,767 865 836,739 871 777,755 847 790,767 880 854,786 860 788,780 800 788 788 y,770 827 793,748 818 763,760 847 830,820 903 893,872 945 940,915 980 965,920 1000 995,953 1020 1012,962 1018 1013,995 1047 1031,943 1032 949,925 1020 1017,934 1022 939,900 965 902,881 975 915,862 927 916 916 g,872 956 920,890 1006 1001,953 1018 997,958 1027 983,972 1056 1025' },
  { from: 2204.6, to: 2736.3, data: '1000 1080 1053 1025,1040 1110 1107,1077 1112 1107 1107 o,1090 1122 1110,1005 1095 1048 1040 g,1015 1138 1130,1090 1200 1173,1170 1295 1236,1172 1252 1188,1148 1215 1212,1190 1228 1193,1167 1262 1259,1228 1308 1231,1153 1237 1159,1115 1165 1126,1085 1150 1093,1063 1137 1136,1077 1165 1091,1067 1117 1078,1012 1095 1021,977 1032 983,980 1047 1010,981 1050 998,907 1010 911,886 993 980,933 1003 936,920 995 992,980 1047 993,966 1030 988,968 1078 1074,1062 1137 1116,1108 1143 1141,1072 1151 1088,1062 1105 1074,1048 1127 1064,1005 1078 1074,996 1102 1017,963 1020 968,963 1020 1007,926 1010 930,928 1015 1008,931 1013 936,927 1015 940,920 992 968,891 972 912,867 930 892,888 948 916,908 985 973,962 1008 993,945 1012 978,973 1075 1073,1047 1110 1107,1062 1127 1107,1010 1108 1040,1008 1060 1013,940 1045 952,928 985 964,910 970 915,865 955 906,823 970 930,915 965 955 926,930 1022 983' }
] }
];

function addPath( parent, cls, d ) {
	var p = document.createElementNS( 'http://www.w3.org/2000/svg', 'path' );
	p.setAttribute( 'class', cls );
	p.setAttribute( 'd', d );
	parent.appendChild( p );
}

function drawChart( chart ) {
	var g = document.getElementById( chart.id );
	var paths = { o: '', g: '', w: '', y: '' };
	var y = function( n ) { return Math.round( chart.base + n * chart.unit ); };
	chart.runs.forEach( function( run ) {
		var rows = run.data.split( ',' );
		var step = ( run.to - run.from ) / ( rows.length - 1 );
		var prev = 0;
		rows.forEach( function( row, i ) {
			var v = row.split( ' ' );
			var close = +v[2];
			var open = v[3] ? +v[3] : prev;
			var col = v[4] || ( close <= open ? 'g' : 'o' );
			var x = Math.round( run.from + i * step );
			paths[col] += 'M' + x + ' ' + y( v[0] ) + 'V' + y( v[1] ) +
				'M' + ( x - step / 2 ).toFixed( 1 ) + ' ' + y( open ) + 'H' + x +
				'M' + x + ' ' + y( close ) + 'H' + ( x + step / 2 + 1 ).toFixed( 1 );
			prev = close;
		} );
	} );
	for( var c in paths )
		addPath( g, 'bar bar-' + c, paths[c] );
}

function drawGrid() {
	var g = document.getElementById( 'grid' );
	var xs = [108.5, 198.5, 288.5, 378.5, 468.5, 558.5, 648.5, 738.5, 828.5, 918.5, 1008.5, 1098.5, 1188.5, 1284.5];
	var ys = [148.5, 210.5, 272.5, 334.5, 396.5, 458.5, 522.5, 584.5, 646.5];
	xs.forEach( function( x ) {
		addPath( g, 'gt', 'M' + x + ' 108V117M' + x + ' 659V668' );
		addPath( g, 'gd gv', 'M' + x + ' 128V652' );
	} );
	ys.forEach( function( y ) {
		addPath( g, 'gt', 'M32 ' + y + 'H40M1372 ' + y + 'H1380' );
		addPath( g, 'gd gh', 'M52 ' + y + 'H1360' );
	} );
}

drawGrid();
charts.forEach( drawChart );
```
